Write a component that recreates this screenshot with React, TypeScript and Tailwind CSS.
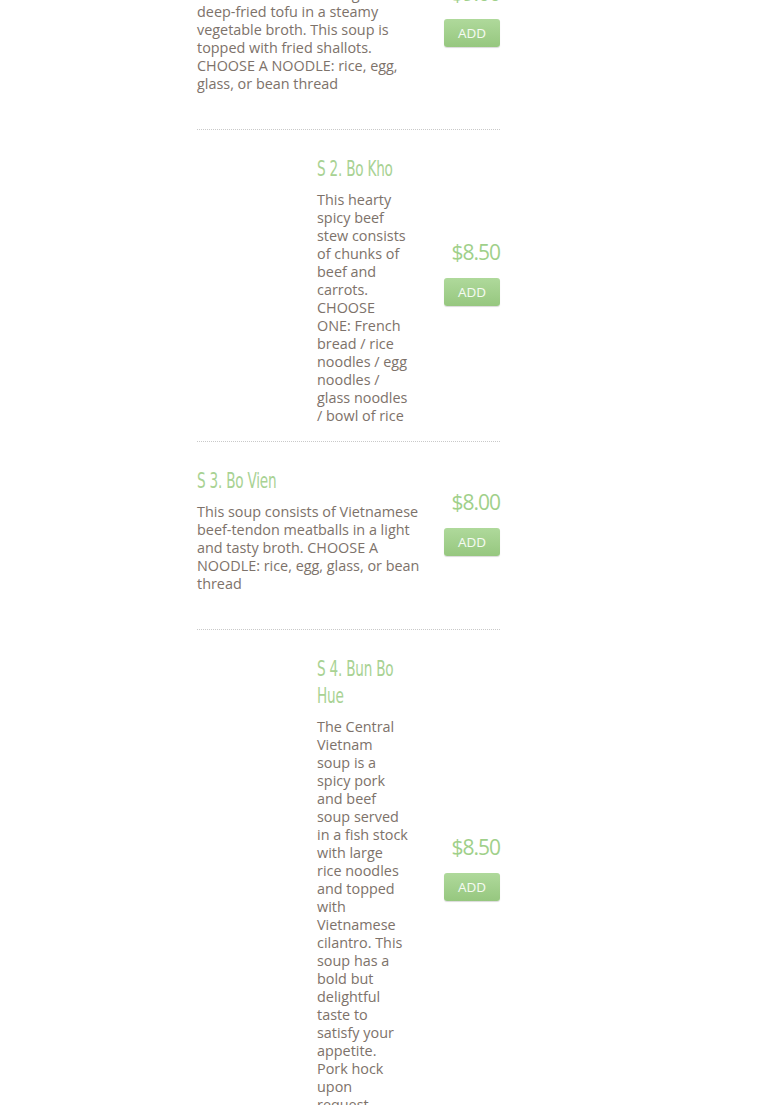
import React from "react";

type Item = {
  title: string;
  desc: string;
  price: string;
  image: boolean;
  pb: "short" | "long";
};

const items: Item[] = [
  {
    title: "S 1. Canh Dau Hu",
    desc:
      "Fresh mushrooms along with deep-fried tofu in a steamy vegetable broth. This soup is topped with fried shallots. CHOOSE A NOODLE: rice, egg, glass, or bean thread",
    price: "$9.00",
    image: false,
    pb: "long",
  },
  {
    title: "S 2. Bo Kho",
    desc:
      "This hearty spicy beef stew consists of chunks of beef and carrots. CHOOSE ONE: French bread / rice noodles / egg noodles / glass noodles / bowl of rice",
    price: "$8.50",
    image: true,
    pb: "short",
  },
  {
    title: "S 3. Bo Vien",
    desc:
      "This soup consists of Vietnamese beef-tendon meatballs in a light and tasty broth. CHOOSE A NOODLE: rice, egg, glass, or bean thread",
    price: "$8.00",
    image: false,
    pb: "long",
  },
  {
    title: "S 4. Bun Bo Hue",
    desc:
      "The Central Vietnam soup is a spicy pork and beef soup served in a fish stock with large rice noodles and topped with Vietnamese cilantro. This soup has a bold but delightful taste to satisfy your appetite. Pork hock upon request.",
    price: "$8.50",
    image: true,
    pb: "short",
  },
];

function MenuRow({ item }: { item: Item }) {
  return (
    <div className="flex items-stretch border-b border-dotted border-[#c9c9c9]">
      {item.image && <div className="w-[120px] shrink-0" />}
      <div
        className={
          "min-w-0 flex-1 pt-[26px] " +
          (item.pb === "long" ? "pb-[36px]" : "pb-[16px] pr-[16px]")
        }
      >
        <h3
          className="w-[139%] origin-left scale-x-[0.72] text-[21px] leading-[27px] tracking-[-0.3px] text-[#a8d293] font-normal"
          style={{ fontFamily: '"Liberation Sans Narrow", "DejaVu Sans Condensed", "Open Sans", sans-serif' }}
        >
          {item.title}
        </h3>
        <p className="mt-[8px] text-[14.4px] leading-[18px] text-[#7d726a]">
          {item.desc}
        </p>
      </div>
      <div className="w-[76px] shrink-0 flex flex-col items-end justify-center pb-[28px]">
        <div className="text-[21px] leading-[30px] tracking-[-1px] text-[#9fd08a]">
          {item.price}
        </div>
        <button className="mt-[11px] w-[56px] h-[28px] rounded-[3px] bg-gradient-to-b from-[#afd99b] to-[#96c77f] text-[13.5px] leading-[28px] text-white/90 shadow-[0_1px_1px_rgba(0,0,0,0.15)]">
          ADD
        </button>
      </div>
    </div>
  );
}

export default function App() {
  return (
    <div
      className="w-full bg-white overflow-hidden"
      style={{ fontFamily: '"Open Sans", "Liberation Sans", sans-serif' }}
    >
      <div className="ml-[197px] w-[303px] -mt-[76px]">
        {items.map((it) => (
          <MenuRow key={it.title} item={it} />
        ))}
      </div>
    </div>
  );
}
